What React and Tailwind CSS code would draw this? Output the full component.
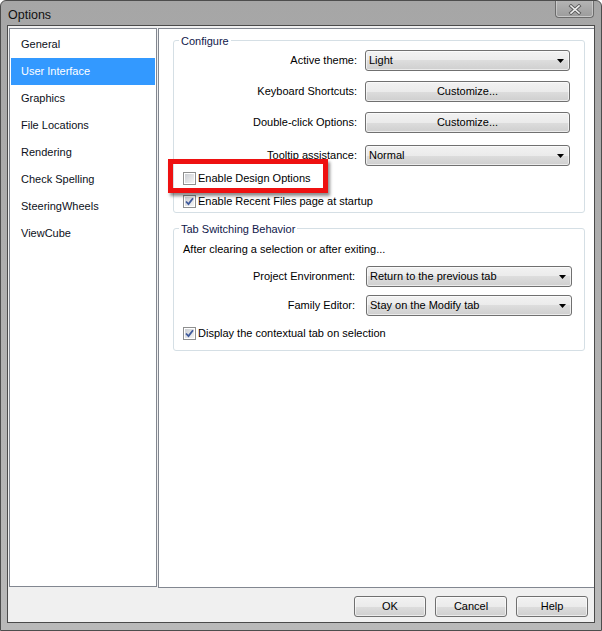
import React from 'react';

const ui = { fontFamily: '"Liberation Sans", Arial, sans-serif' };

const pages = ['General', 'User Interface', 'Graphics', 'File Locations', 'Rendering', 'Check Spelling', 'SteeringWheels', 'ViewCube'];

function Combo({ value, className = '' }) {
  return (
    <div className={`flex h-[21px] items-center justify-between rounded-[3px] border border-[#707070] bg-[linear-gradient(#f2f2f2,#ebebeb_50%,#dddddd_50%,#cfcfcf)] pl-[3px] pr-[5px] shadow-[inset_0_0_0_1px_rgba(255,255,255,0.6)] ${className}`}>
      <span>{value}</span>
      <svg width="7" height="4" viewBox="0 0 7 4">
        <path d="M0 0h7L3.5 4z" fill="#000" />
      </svg>
    </div>
  );
}

function PushButton({ children, className = '' }) {
  return (
    <button className={`flex h-[21px] items-center justify-center rounded-[3px] border border-[#707070] bg-[linear-gradient(#f2f2f2,#ebebeb_50%,#dddddd_50%,#cfcfcf)] text-black shadow-[inset_0_0_0_1px_rgba(255,255,255,0.6)] ${className}`}>
      {children}
    </button>
  );
}

function Check({ checked, label }) {
  return (
    <label className="flex h-[15px] items-center">
      <span className="flex h-[13px] w-[13px] items-center justify-center border border-[#8e8f8f] bg-white">
        <span className="relative flex h-[9px] w-[9px] items-center justify-center bg-gradient-to-br from-[#cbced3] to-[#f5f5f5]">
          {checked && (
            <svg width="11" height="11" viewBox="0 0 11 11" className="absolute -left-[1px] -top-[1px]">
              <path d="M2 5.5l2.5 2.6L9 2.3" fill="none" stroke="#3f5a9c" strokeWidth="1.8" />
            </svg>
          )}
        </span>
      </span>
      <span className="ml-[2px]">{label}</span>
    </label>
  );
}

function Group({ title, children, className = '' }) {
  return (
    <div className={`flex flex-col rounded-[3px] border border-[#d5dfe5] ${className}`}>
      <span className="-mt-[7px] ml-[5px] self-start bg-white px-[2px] leading-[14px] text-[#10184a]">{title}</span>
      {children}
    </div>
  );
}

function Row({ label, labelWidth, gap, children }) {
  return (
    <div className="flex h-[21px] items-center">
      <span className="text-right" style={{ width: labelWidth, marginRight: gap }}>{label}</span>
      {children}
    </div>
  );
}

export default function App() {
  return (
    <div className="flex h-[631px] w-[602px] flex-col rounded-t-[6px] border border-[#4d4d4d] bg-gradient-to-b from-[#a6a6a6] to-[#b9b9b9] text-[11px] text-black" style={ui}>
      {/* title bar */}
      <div className="flex h-[24px] shrink-0 items-start justify-between">
        <span className="mt-[6px] ml-[7px] text-[12.5px] leading-[16px] text-[#111]">Options</span>
        <button className="mr-[7px] flex h-[17px] w-[39px] items-center justify-center rounded-b-[4px] border border-t-0 border-[#6b6b6b] bg-gradient-to-b from-[#b4b4b4] to-[#9c9c9c] shadow-[inset_0_-1px_0_rgba(255,255,255,0.45),inset_1px_0_0_rgba(255,255,255,0.35),inset_-1px_0_0_rgba(255,255,255,0.35)]">
          <svg width="14" height="11" viewBox="0 0 14 11">
            <path d="M3 2l8 7M11 2l-8 7" stroke="#5a5a5a" strokeWidth="3.4" strokeLinecap="square" />
            <path d="M3 2l8 7M11 2l-8 7" stroke="#efefef" strokeWidth="1.6" strokeLinecap="square" />
          </svg>
        </button>
      </div>

      {/* client area */}
      <div className="mx-[6px] mb-[7px] flex flex-1 flex-col border border-[#4a4a4a] bg-[#f0f0f0]">
        <div className="flex flex-1">
          {/* page list */}
          <div className="mt-[2px] mb-[1px] ml-[1px] flex w-[148px] flex-col border border-[#828790] bg-white px-[1px] pt-[2px]">
            {pages.map((p) => (
              <div
                key={p}
                className={`flex h-[27px] shrink-0 items-center pl-[10px] ${p === 'User Interface' ? 'bg-[#3399ff] text-white' : 'text-[#0c1020]'}`}
              >
                {p}
              </div>
            ))}
          </div>

          {/* settings panel */}
          <div className="relative mt-[2px] ml-[1px] flex flex-1 flex-col border-t border-l border-b border-[#828790] bg-white">
            <Group title="Configure" className="mt-[11px] ml-[14px] mr-[9px] pb-[3px]">
              <div className="mt-[2px]">
                <Row label="Active theme:" labelWidth={183} gap={8}>
                  <Combo value="Light" className="w-[205px]" />
                </Row>
              </div>
              <div className="mt-[10px]">
                <Row label="Keyboard Shortcuts:" labelWidth={183} gap={8}>
                  <PushButton className="w-[205px]">Customize...</PushButton>
                </Row>
              </div>
              <div className="mt-[10px]">
                <Row label="Double-click Options:" labelWidth={183} gap={8}>
                  <PushButton className="w-[205px]">Customize...</PushButton>
                </Row>
              </div>
              <div className="mt-[12px]">
                <Row label="Tooltip assistance:" labelWidth={183} gap={8}>
                  <Combo value="Normal" className="w-[205px]" />
                </Row>
              </div>
              <div className="mt-[5px] pl-[9px]">
                <Check label="Enable Design Options" />
              </div>
              <div className="mt-[8px] pl-[9px]">
                <Check checked label="Enable Recent Files page at startup" />
              </div>
            </Group>

            <Group title="Tab Switching Behavior" className="mt-[15px] ml-[14px] mr-[9px] pb-[9px]">
              <span className="mt-[6px] pl-[9px] leading-[14px]">After clearing a selection or after exiting...</span>
              <div className="mt-[10px]">
                <Row label="Project Environment:" labelWidth={181} gap={11}>
                  <Combo value="Return to the previous tab" className="w-[206px]" />
                </Row>
              </div>
              <div className="mt-[8px]">
                <Row label="Family Editor:" labelWidth={181} gap={11}>
                  <Combo value="Stay on the Modify tab" className="w-[206px]" />
                </Row>
              </div>
              <div className="mt-[10px] pl-[9px]">
                <Check checked label="Display the contextual tab on selection" />
              </div>
            </Group>

            {/* red annotation box */}
            <div className="absolute left-[9px] top-[130px] h-[34px] w-[160px] border-[5px] border-[#ee1111] shadow-[2px_3px_3px_rgba(0,0,0,0.45)]" />
          </div>
        </div>

        {/* dialog buttons */}
        <div className="flex h-[34px] shrink-0 items-start justify-end gap-[9px] pt-[8px] pr-[6px]">
          <PushButton className="w-[72px]">OK</PushButton>
          <PushButton className="w-[72px]">Cancel</PushButton>
          <PushButton className="w-[72px]">Help</PushButton>
        </div>
      </div>
    </div>
  );
}
